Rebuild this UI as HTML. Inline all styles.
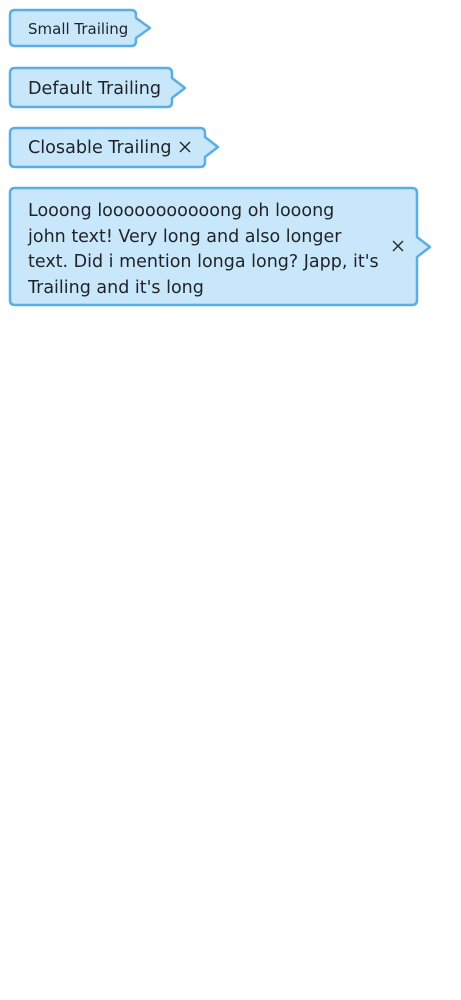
<!DOCTYPE html>
<html><head><meta charset="utf-8"><style>
html,body{margin:0;padding:0;background:#fff;width:461px;height:1000px;overflow:hidden}
body{position:relative;font-family:"DejaVu Sans","Liberation Sans",sans-serif;color:#1f2328}
svg{position:absolute;left:0;top:0}
.t{position:absolute;white-space:nowrap}
</style></head><body>
<svg width="461" height="1000" viewBox="0 0 461 1000">
<g fill="#c8e7fa" stroke="#5aaee6" stroke-width="2.5" stroke-linejoin="round">
<path d="M15 10 H131 Q136 10 136 15 V18 L150 28 L136 38 V41 Q136 46 131 46 H15 Q10 46 10 41 V15 Q10 10 15 10 Z"/>
<path d="M15 68 H167 Q172 68 172 73 V78 L185 88 L172 98 V102 Q172 107 167 107 H15 Q10 107 10 102 V73 Q10 68 15 68 Z"/>
<path d="M15 128 H200 Q205 128 205 133 V137 L218 147 L205 157 V162 Q205 167 200 167 H15 Q10 167 10 162 V133 Q10 128 15 128 Z"/>
<path d="M15 188 H412 Q417 188 417 193 V237 L430 247 L417 257 V300 Q417 305 412 305 H15 Q10 305 10 300 V193 Q10 188 15 188 Z"/>
</g>
<g stroke="#1f2328" stroke-width="1.3" fill="none">
<path d="M180 142 L190 152 M190 142 L180 152"/>
<path d="M393 241 L403 251 M403 241 L393 251"/>
</g>
</svg>
<div class="t" style="left:28px;top:19px;font-size:15px;line-height:20px">Small Trailing</div>
<div class="t" style="left:28px;top:78px;font-size:17.6px;line-height:22px">Default Trailing</div>
<div class="t" style="left:28px;top:137px;font-size:17.6px;line-height:22px">Closable Trailing</div>
<div class="t" style="left:28px;top:199px;font-size:17.5px;line-height:25.7px">Looong looooooooooong oh looong<br>john text! Very long and also longer<br>text. Did i mention longa long? Japp, it's<br>Trailing and it's long</div>
</body></html>
